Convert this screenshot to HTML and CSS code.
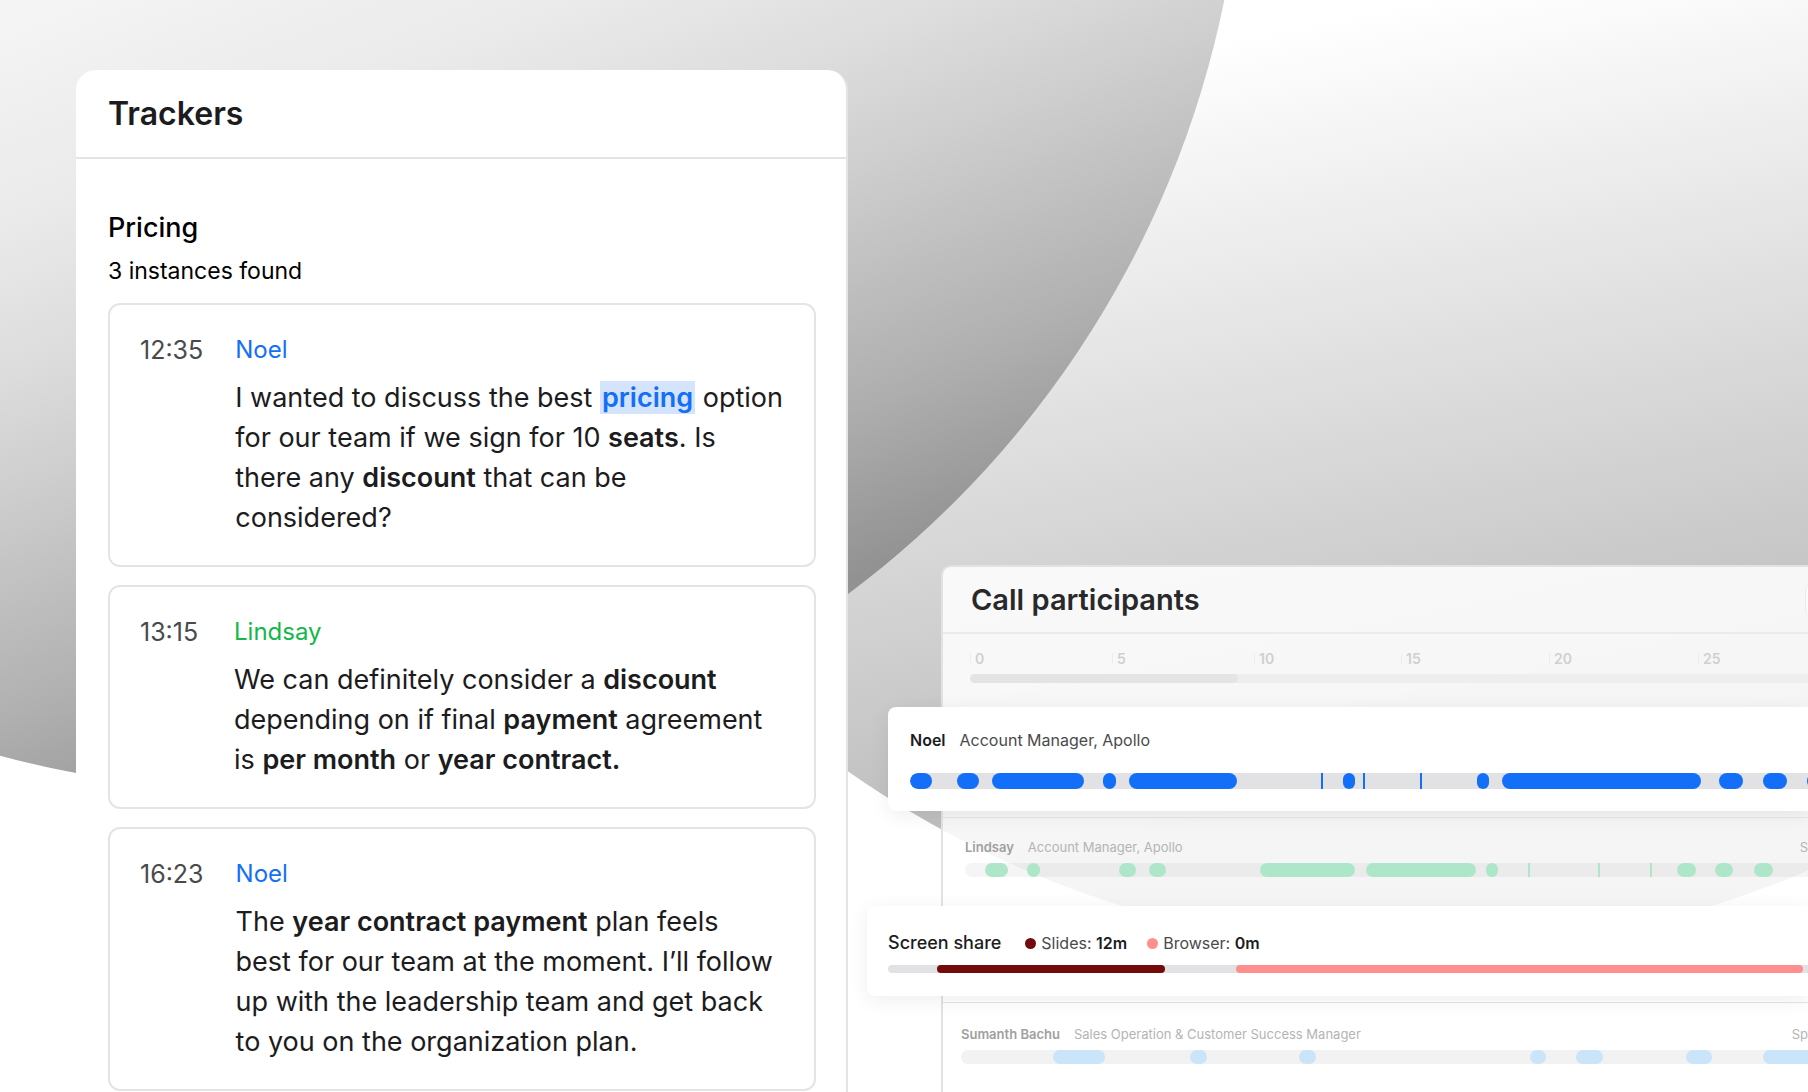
FILE: index.html
```html
<!DOCTYPE html>
<html lang="en">
<head>
    <meta charset="UTF-8">
    <meta name="viewport" content="width=device-width, initial-scale=1.0">
    <title>Trackers</title>
    <link rel="stylesheet" href="styles.css">
</head>
<body>
    <!-- Background circles -->
    <svg class="backdrop" aria-hidden="true">
        <defs>
            <linearGradient id="fade-right" gradientUnits="userSpaceOnUse" x1="1232" y1="38" x2="1389" y2="827">
                <stop offset="0" stop-color="#ffffff"/>
                <stop offset="1" stop-color="#b6b6b6"/>
            </linearGradient>
            <linearGradient id="fade-left" gradientUnits="userSpaceOnUse" x1="0" y1="0" x2="299" y2="787">
                <stop offset="0" stop-color="#f5f5f5"/>
                <stop offset="0.25" stop-color="#eaeaea"/>
                <stop offset="0.42" stop-color="#dcdcdc"/>
                <stop offset="0.55" stop-color="#cecece"/>
                <stop offset="0.8" stop-color="#b0b0b0"/>
                <stop offset="1" stop-color="#929292"/>
            </linearGradient>
        </defs>
        <circle cx="1417" cy="-40" r="991" fill="url(#fade-right)"/>
        <circle cx="258" cy="-196" r="986" fill="url(#fade-left)"/>
    </svg>

    <main class="scene">
        <!-- Trackers -->
        <section class="trackers">
            <header class="trackers-header">
                <h1>Trackers</h1>
            </header>
            <div class="trackers-body">
                <h2>Pricing</h2>
                <p class="count">3 instances found</p>

                <article class="quote">
                    <time>12:35</time>
                    <div class="quote-text">
                        <h3 class="blue">Noel</h3>
                        <p>I wanted to discuss the best <mark>pricing</mark> option<br>for our team if we sign for 10 <b>seats</b>. Is<br>there any <b>discount</b> that can be<br>considered?</p>
                    </div>
                </article>

                <article class="quote">
                    <time>13:15</time>
                    <div class="quote-text">
                        <h3 class="green">Lindsay</h3>
                        <p>We can definitely consider a <b>discount</b><br>depending on if final <b>payment</b> agreement<br>is <b>per month</b> or <b>year contract.</b></p>
                    </div>
                </article>

                <article class="quote">
                    <time>16:23</time>
                    <div class="quote-text">
                        <h3 class="blue">Noel</h3>
                        <p>The <b>year contract payment</b> plan feels<br>best for our team at the moment. I’ll follow<br>up with the leadership team and get back<br>to you on the organization plan.</p>
                    </div>
                </article>
            </div>
        </section>

        <!-- Call participants -->
        <section class="call">
            <header class="call-header">
                <h2>Call participants</h2>
                <button class="call-button" type="button" aria-label="Options"></button>
            </header>

            <div class="axis">
                <div class="ticks">
                    <span>0</span>
                    <span>5</span>
                    <span>10</span>
                    <span>15</span>
                    <span>20</span>
                    <span>25</span>
                </div>
                <div class="scroll"><div class="scroll-thumb"></div></div>
            </div>

            <div class="raised noel">
                <div class="person">
                    <b>Noel</b>
                    <span>Account Manager, Apollo</span>
                </div>
                <div class="track" data-track="noel"></div>
            </div>

            <div class="row lindsay">
                <div class="person">
                    <b>Lindsay</b>
                    <span>Account Manager, Apollo</span>
                    <span class="stat">S</span>
                </div>
                <div class="track" data-track="lindsay"></div>
            </div>

            <div class="raised share">
                <div class="share-head">
                    <h3>Screen share</h3>
                    <span class="legend slides">Slides: <b>12m</b></span>
                    <span class="legend browser">Browser: <b>0m</b></span>
                </div>
                <div class="track" data-track="share"></div>
            </div>

            <div class="row sumanth">
                <div class="person">
                    <b>Sumanth Bachu</b>
                    <span>Sales Operation &amp; Customer Success Manager</span>
                    <span class="stat">Sp</span>
                </div>
                <div class="track" data-track="sumanth"></div>
            </div>
        </section>
    </main>

    <script src="tracks.js"></script>
</body>
</html>
```
FILE: styles.css
```css
* {
    margin: 0;
    padding: 0;
    box-sizing: border-box;
}
body {
    font-family: Inter, "Liberation Sans", sans-serif;
    background: #fff;
    color: #1c1c1e;
    overflow: hidden;
}
h1, h2, h3 {
    font-weight: 500;
}
b {
    font-weight: 600;
}
.backdrop {
    position: absolute;
    top: 0;
    left: 0;
    width: 100%;
    height: 100vh;
}
.scene {
    position: relative;
    display: grid;
    grid-template-columns: 772fr 960fr;
    height: 100vh;
    padding: 70px 0 0 76px;
    overflow: hidden;
}

/* Trackers panel */
.trackers {
    background: #fff;
    border-right: 2px solid #e4e4e5;
    border-radius: 20px 20px 0 0;
}
.trackers-header {
    padding: 24px 32px 23px;
    border-bottom: 2px solid #e4e4e5;
}
.trackers-header h1 {
    font-size: 32px;
    line-height: 40px;
    font-weight: 600;
}
.trackers-body {
    padding: 51px 30px 30px 32px;
    color: #000;
}
.trackers-body h2 {
    font-size: 27px;
    line-height: 36px;
}
.count {
    margin: 9px 0 16px;
    font-size: 23px;
    line-height: 32px;
}
.quote {
    display: flex;
    gap: 32px;
    padding: 29px 24px 27px 30px;
    margin-bottom: 18px;
    border: 2px solid #e4e4e5;
    border-radius: 12px;
    color: #1c1c1e;
}
.quote time {
    min-width: 62px;
    font-size: 25px;
    line-height: 32px;
    color: #4a4a4c;
}
.quote h3 {
    font-size: 24px;
    line-height: 32px;
    font-weight: 400;
    margin-bottom: 12px;
}
.quote p {
    font-size: 27px;
    line-height: 40px;
}
.blue {
    color: #146ff8;
}
.green {
    color: #12b84a;
}
mark {
    padding: 0 2px;
    background: #d5e4fd;
    color: #146ff8;
    font-weight: 600;
}

/* Call participants panel */
.call {
    margin: 495px 0 0 93px;
    background: rgba(255, 255, 255, 0.86);
    border: solid #e2e2e3;
    border-width: 2px 0 0 2px;
    border-radius: 10px 0 0 0;
}
.call-header {
    display: flex;
    align-items: center;
    justify-content: space-between;
    height: 67px;
    padding-left: 28px;
    border-bottom: 2px solid #e9ebee;
}
.call-header h2 {
    font-size: 29px;
    line-height: 36px;
    font-weight: 600;
    color: #29292b;
}
.call-button {
    width: 40px;
    height: 32px;
    margin-right: -37px;
    background: #fbfbfb;
    border: 1px solid #ececed;
    border-radius: 6px;
}
.axis {
    height: 73px;
    padding: 19px 0 0 27px;
}
.ticks {
    display: grid;
    grid-template-columns: 142fr 142fr 147fr 148fr 149fr 110fr;
}
.ticks span {
    padding-left: 4px;
    border-left: 1px solid #ededed;
    font-size: 14px;
    line-height: 12px;
    font-weight: 600;
    color: #d0d0d1;
}
.scroll {
    height: 9px;
    margin-top: 9px;
    border-radius: 5px 0 0 5px;
    background: #eee;
}
.scroll-thumb {
    width: 32%;
    height: 9px;
    border-radius: 5px;
    background: #e4e4e4;
}
.person {
    display: flex;
    gap: 14px;
    font-size: 13px;
    line-height: 20px;
    white-space: nowrap;
}
.stat {
    margin-left: auto;
}

/* Cards lifted over the panel */
.raised {
    position: relative;
    background: #fff;
    border-radius: 8px 0 0 8px;
    box-shadow: 0 4px 20px rgba(0, 0, 0, 0.07);
}
.noel {
    margin-left: -55px;
    padding: 21px 0 22px 22px;
}
.noel .person {
    margin-bottom: 21px;
    font-size: 16px;
    line-height: 24px;
}
.noel .person span {
    color: #4a4a4c;
}
.share {
    margin-left: -76px;
    padding: 25px 0 23px 21px;
}
.share-head {
    display: flex;
    align-items: center;
    gap: 20px;
    margin-bottom: 10px;
    font-size: 16px;
    line-height: 24px;
}
.share-head h3 {
    margin-right: 4px;
    font-size: 18px;
}
.legend {
    color: #4a4a4c;
}
.legend b {
    color: #1c1c1e;
}
.legend::before {
    content: '';
    display: inline-block;
    width: 11px;
    height: 11px;
    margin-right: 5px;
    border-radius: 50%;
    background: #fe8f8f;
}
.slides::before {
    background: #730a0c;
}

/* Faded rows */
.row {
    margin-top: 6px;
    border-top: 1px solid #e4e7ea;
}
.row .person {
    color: #b4b4b5;
}
.row b {
    color: #a0a0a1;
}
.lindsay {
    padding: 19px 0 29px 22px;
}
.sumanth {
    padding: 21px 0 28px 18px;
}
.row .track {
    margin-top: 6px;
}

/* Timelines */
.track {
    position: relative;
    height: 16px;
    border-radius: 8px 0 0 8px;
    background: #e2e2e5;
    overflow: hidden;
}
.track span {
    position: absolute;
    top: 0;
    height: 100%;
    border-radius: 8px;
    background: #146ff8;
}
.track .blip {
    border-radius: 0;
}
.lindsay .track {
    height: 14px;
    background: rgba(0, 0, 0, 0.04);
}
.lindsay .track span {
    background: #ade6c9;
}
.sumanth .track {
    height: 14px;
    background: #f2f2f2;
}
.sumanth .track span {
    background: #cae4fa;
}
.share .track {
    height: 8px;
}
.share .track span {
    background: #fe8f8f;
}
.share .track span:first-child {
    background: #730a0c;
}
```
FILE: tracks.js
```js
// [start, length] of each stretch, in units of the track's total
const tracks = {
    noel: {
        total: 898,
        parts: [[0, 22], [47, 22], [82, 92], [193, 13], [219, 108], [411, 2], [433, 12], [453, 2],
            [510, 2], [567, 12], [592, 199], [809, 24], [853, 24], [897, 24]]
    },
    lindsay: {
        total: 843,
        parts: [[20, 23], [62, 13], [154, 17], [184, 17], [295, 95], [401, 110], [521, 12],
            [563, 2], [633, 2], [685, 2], [712, 19], [750, 18], [789, 19]]
    },
    share: {
        total: 920,
        parts: [[49, 228], [348, 567]]
    },
    sumanth: {
        total: 847,
        parts: [[92, 52], [229, 17], [338, 17], [569, 16], [615, 27], [725, 26], [802, 60]]
    }
};

document.querySelectorAll(".track").forEach(el => {
    const track = tracks[el.dataset.track];
    track.parts.forEach(([start, length]) => {
        const part = document.createElement("span");
        part.style.left = (start / track.total * 100) + "%";
        part.style.width = (length / track.total * 100) + "%";
        if (length <= 2) part.className = "blip";
        el.appendChild(part);
    });
});
```
